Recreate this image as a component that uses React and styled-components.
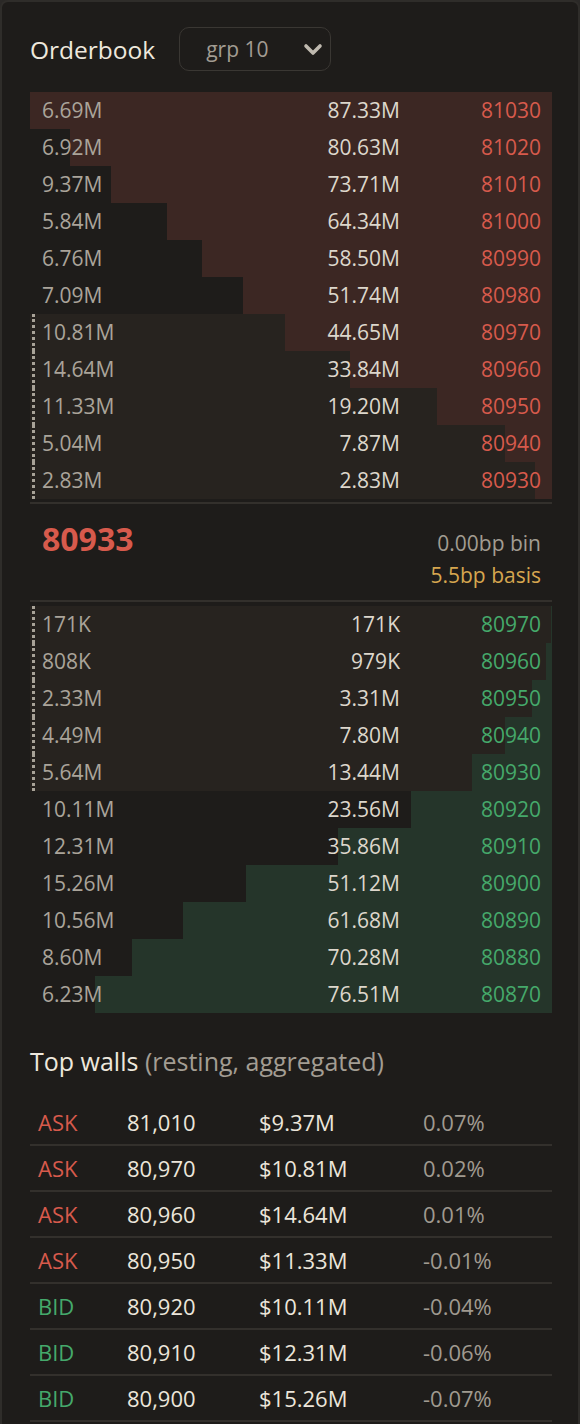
import React from 'react'
import styled, { createGlobalStyle } from 'styled-components'

const GlobalStyle = createGlobalStyle`
  body {
    margin: 0;
    background: #2b2927;
    font-family: "Open Sans", "Noto Sans", sans-serif;
  }
`

const RED = '#d75a4c'
const GREEN = '#45a96b'
const SCALE = 87.33

const Panel = styled.div`
  box-sizing: border-box;
  width: 580px;
  min-height: 1500px;
  background: #1e1c1a;
  border: 2px solid #2f2d2a;
  border-radius: 8px;
  padding: 25px 26px 0 28px;
  color: #e9e3d8;
`

const Header = styled.div`
  display: flex;
  align-items: center;
  gap: 24px;
  height: 44px;
`

const Title = styled.h2`
  margin: 0;
  font-size: 24.5px;
  font-weight: 400;
  color: #eee8dd;
`

const Select = styled.div`
  box-sizing: border-box;
  display: flex;
  align-items: center;
  justify-content: space-between;
  width: 152px;
  height: 44px;
  padding: 0 7px 0 26px;
  border: 1px solid #3a3733;
  border-radius: 10px;
  font-size: 21px;
  color: #a29c92;
`

const Book = styled.div`
  margin-top: 21px;
`

const Row = styled.div`
  position: relative;
  display: grid;
  grid-template-columns: 1fr 1fr 141px;
  align-items: center;
  height: 37px;
  padding: 0 11px 2px 12px;
  box-sizing: border-box;
  font-size: 21px;
  background: linear-gradient(
    to left,
    ${p => p.$bar} ${p => p.$fill}%,
    ${p => (p.$near ? '#27231f' : 'transparent')} ${p => p.$fill}%
  );

  &::before {
    content: '';
    display: ${p => (p.$near ? 'block' : 'none')};
    position: absolute;
    left: 2px;
    top: 0;
    bottom: 0;
    border-left: 3px dotted #a9a398;
  }
`

const Size = styled.span`
  color: #aaa49a;
`

const Total = styled.span`
  color: #ddd7cc;
  text-align: right;
`

const Price = styled.span`
  color: ${p => p.$color};
  text-align: right;
`

const Mid = styled.div`
  display: flex;
  justify-content: space-between;
  align-items: flex-start;
  height: 96px;
  margin: 3px 0 4px;
  padding: 0 11px 0 12px;
  border-top: 2px solid #33302c;
  border-bottom: 2px solid #33302c;
`

const Last = styled.div`
  margin-top: 15px;
  font-size: 32px;
  line-height: 40px;
  font-weight: 700;
  color: ${RED};
`

const Stats = styled.div`
  margin-top: 23px;
  text-align: right;
  font-size: 21px;
  line-height: 32px;
`

const Stat = styled.div`
  color: ${p => p.$color};
`

const WallsTitle = styled.h3`
  margin: 32px 0 23px;
  font-size: 25px;
  line-height: 32px;
  font-weight: 400;
  color: #eee8dd;

  span {
    color: #a39d93;
  }
`

const WallRow = styled.div`
  display: grid;
  grid-template-columns: 89px 132px 164px 1fr;
  align-items: center;
  height: 44px;
  border-bottom: 2px solid #33302c;
  font-size: 22px;
  color: #ece6db;

  span {
    padding-left: 8px;
  }
`

const Side = styled.span`
  color: ${p => p.$color};
`

const Pct = styled.span`
  color: #a09a90;
`

const asks = [
  ['6.69M', '87.33M', 81030, 87.33],
  ['6.92M', '80.63M', 81020, 80.63],
  ['9.37M', '73.71M', 81010, 73.71],
  ['5.84M', '64.34M', 81000, 64.34],
  ['6.76M', '58.50M', 80990, 58.5],
  ['7.09M', '51.74M', 80980, 51.74],
  ['10.81M', '44.65M', 80970, 44.65, true],
  ['14.64M', '33.84M', 80960, 33.84, true],
  ['11.33M', '19.20M', 80950, 19.2, true],
  ['5.04M', '7.87M', 80940, 7.87, true],
  ['2.83M', '2.83M', 80930, 2.83, true],
]

const bids = [
  ['171K', '171K', 80970, 0.171, true],
  ['808K', '979K', 80960, 0.979, true],
  ['2.33M', '3.31M', 80950, 3.31, true],
  ['4.49M', '7.80M', 80940, 7.8, true],
  ['5.64M', '13.44M', 80930, 13.44, true],
  ['10.11M', '23.56M', 80920, 23.56],
  ['12.31M', '35.86M', 80910, 35.86],
  ['15.26M', '51.12M', 80900, 51.12],
  ['10.56M', '61.68M', 80890, 61.68],
  ['8.60M', '70.28M', 80880, 70.28],
  ['6.23M', '76.51M', 80870, 76.51],
]

const walls = [
  ['ASK', '81,010', '$9.37M', '0.07%'],
  ['ASK', '80,970', '$10.81M', '0.02%'],
  ['ASK', '80,960', '$14.64M', '0.01%'],
  ['ASK', '80,950', '$11.33M', '-0.01%'],
  ['BID', '80,920', '$10.11M', '-0.04%'],
  ['BID', '80,910', '$12.31M', '-0.06%'],
  ['BID', '80,900', '$15.26M', '-0.07%'],
]

const Chevron = () => (
  <svg width="20" height="14" viewBox="0 0 20 14">
    <polyline points="3,4 10,11 17,4" fill="none" stroke="#bfb9af" strokeWidth="3.6" strokeLinecap="round" strokeLinejoin="round" />
  </svg>
)

const Levels = ({ rows, bar, color }) =>
  rows.map(([size, total, price, cum, near]) => (
    <Row key={price} $bar={bar} $fill={((cum / SCALE) * 100).toFixed(2)} $near={near}>
      <Size>{size}</Size>
      <Total>{total}</Total>
      <Price $color={color}>{price}</Price>
    </Row>
  ))

export default function App() {
  return (
    <>
      <GlobalStyle />
      <Panel>
        <Header>
          <Title>Orderbook</Title>
          <Select>
            grp 10
            <Chevron />
          </Select>
        </Header>

        <Book>
          <Levels rows={asks} bar="#3c2723" color={RED} />
          <Mid>
            <Last>80933</Last>
            <Stats>
              <Stat $color="#a29c92">0.00bp bin</Stat>
              <Stat $color="#d6a64f">5.5bp basis</Stat>
            </Stats>
          </Mid>
          <Levels rows={bids} bar="#25352a" color={GREEN} />
        </Book>

        <WallsTitle>
          Top walls <span>(resting, aggregated)</span>
        </WallsTitle>
        {walls.map(([side, price, value, pct]) => (
          <WallRow key={price}>
            <Side $color={side === 'ASK' ? RED : GREEN}>{side}</Side>
            <span>{price}</span>
            <span>{value}</span>
            <Pct>{pct}</Pct>
          </WallRow>
        ))}
      </Panel>
    </>
  )
}
